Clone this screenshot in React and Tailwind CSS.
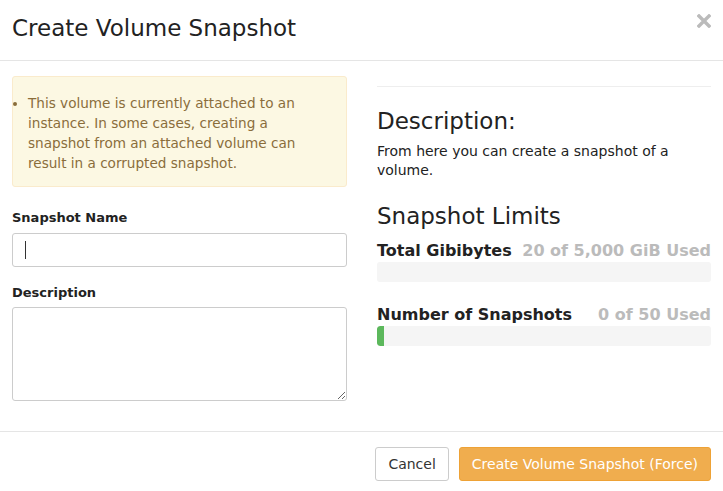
export default function App() {
    return (
        <div className="w-[723px] h-[491px] bg-white text-[#222] flex flex-col font-['DejaVu_Sans',sans-serif]">
            <div className="h-[61px] flex items-start justify-between pl-3 pr-3 border-b border-[#e5e5e5]">
                <h4 className="mt-[14px] text-[23px] leading-[28px] text-[#222]">Create Volume Snapshot</h4>
                <svg className="mt-[14px] mr-0" width="14" height="14" viewBox="0 0 14 14">
                    <path d="M2 2 L12 12 M12 2 L2 12" stroke="#bbbbbb" strokeWidth="3.4" strokeLinecap="square" />
                </svg>
            </div>

            <div className="h-[370px] flex gap-[30px] px-3 pt-[15px]">
                <div className="w-[335px] flex flex-col">
                    <div className="h-[111px] bg-[#fcf8e3] border border-[#faebcc] rounded-[3px] pl-[15px] pr-[38px] pt-[16px]">
                        <ul className="list-disc pl-0 ml-0 text-[13.6px] leading-[20px] text-[#8a6d3b]">
                            <li>
                                This volume is currently attached to an instance. In some cases, creating a snapshot from an attached volume can result in a corrupted snapshot.
                            </li>
                        </ul>
                    </div>

                    <label className="mt-[21px] text-[13px] font-bold text-[#222] leading-[20px]">Snapshot Name</label>
                    <div className="mt-[5px] h-[34px] border border-[#ccc] rounded-[3px] flex items-center px-3">
                        <span className="block w-px h-[18px] bg-[#333]"></span>
                    </div>

                    <label className="mt-[16px] text-[13px] font-bold text-[#222] leading-[20px]">Description</label>
                    <textarea className="mt-[4px] h-[94px] border border-[#ccc] rounded-[3px] resize-y outline-none"></textarea>
                </div>

                <div className="w-[334px] flex flex-col">
                    <hr className="mt-[10px] border-t border-[#eeeeee]" />
                    <h3 className="mt-[20px] text-[23px] leading-[28px] text-[#222]">Description:</h3>
                    <p className="mt-[7px] text-[14px] leading-[19px] text-[#222]">
                        From here you can create a snapshot of a volume.
                    </p>
                    <h3 className="mt-[22px] text-[23px] leading-[28px] text-[#222]">Snapshot Limits</h3>

                    <div className="mt-[10px] flex items-baseline justify-between text-[16px] font-bold leading-[22px]">
                        <span className="text-[#222]">Total Gibibytes</span>
                        <span className="text-[#bbbbbb]">20 of 5,000 GiB Used</span>
                    </div>
                    <div className="mt-0 h-[20px] bg-[#f5f5f5] rounded-[3px]"></div>

                    <div className="mt-[22px] flex items-baseline justify-between text-[16px] font-bold leading-[22px]">
                        <span className="text-[#222]">Number of Snapshots</span>
                        <span className="text-[#bbbbbb]">0 of 50 Used</span>
                    </div>
                    <div className="mt-0 h-[20px] bg-[#f5f5f5] rounded-[3px] overflow-hidden">
                        <div className="h-full w-[7px] bg-[#5cb85c] rounded-l-[3px]"></div>
                    </div>
                </div>
            </div>

            <div className="flex-1 border-t border-[#e5e5e5] flex items-start justify-end gap-[10px] pr-3 pt-[15px]">
                <button className="h-[34px] px-3 border border-[#ccc] rounded-[3px] bg-white text-[14px] text-[#333]">Cancel</button>
                <button className="h-[34px] px-3 border border-[#eea236] rounded-[3px] bg-[#f0ad4e] text-[14px] text-white">Create Volume Snapshot (Force)</button>
            </div>
        </div>
    );
}
